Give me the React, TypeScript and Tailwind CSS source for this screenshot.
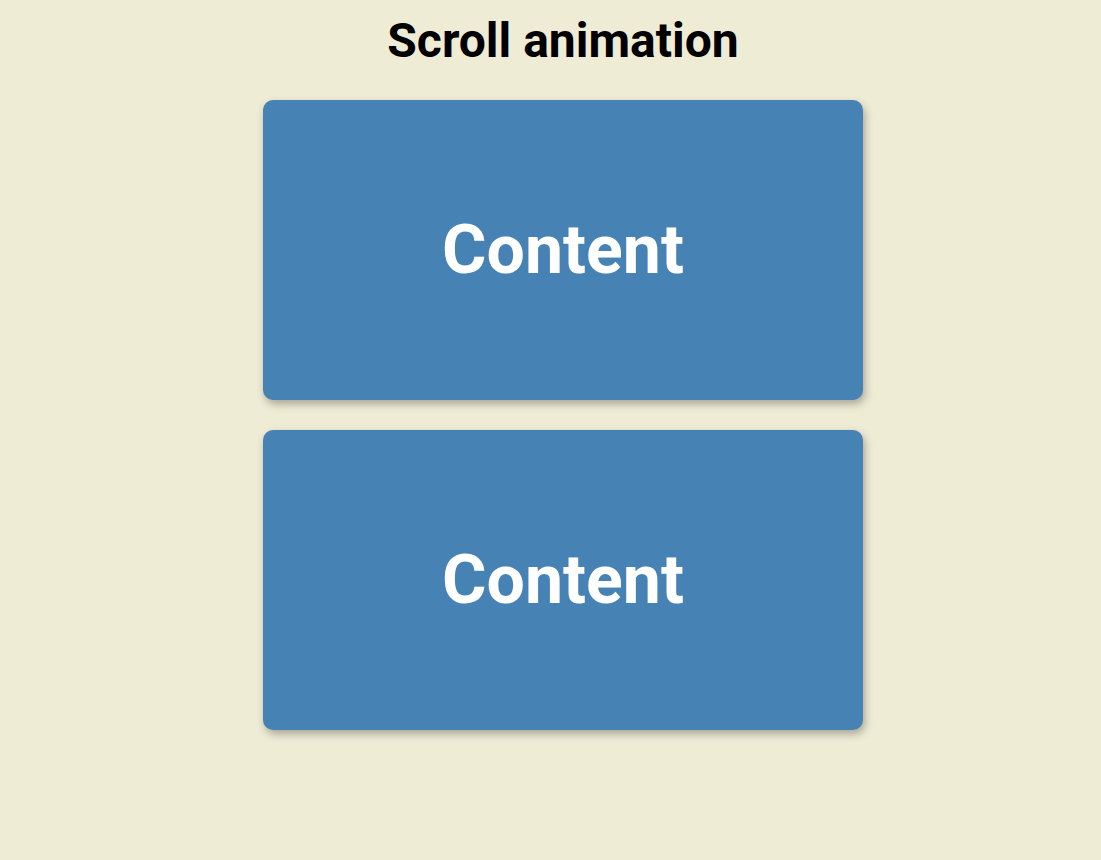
import React from "react";

export default function App() {
  return (
    <div className="min-h-[860px] w-full bg-[#efecd6] flex flex-col items-center pl-[25px]" style={{ fontFamily: "Roboto, sans-serif" }}>
      <h1 className="text-[48px] font-bold text-black leading-none mt-[17px] mb-[35px]">Scroll animation</h1>
      <div className="flex flex-col gap-[30px]">
        {[0, 1].map((i) => (
          <div key={i} className="w-[600px] h-[300px] rounded-[10px] bg-[#4682b4] shadow-[2px_4px_8px_rgba(0,0,0,0.3)] flex items-center justify-center">
            <span className="text-white font-bold text-[68px] leading-none">Content</span>
          </div>
        ))}
      </div>
    </div>
  );
}
